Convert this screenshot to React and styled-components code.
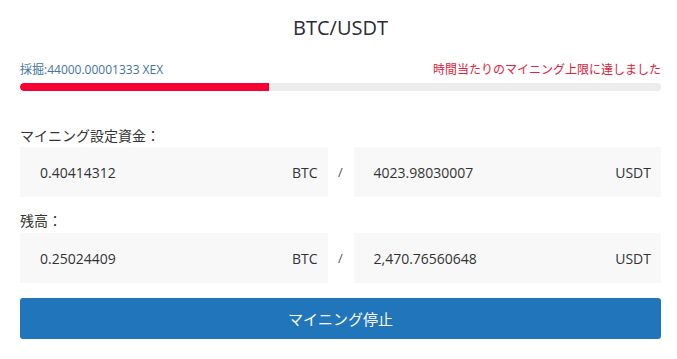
import React from "react";
import styled, { createGlobalStyle } from "styled-components";

const GlobalStyle = createGlobalStyle`
	body {
		margin: 0;
		background: #fff;
		font-family: "Open Sans", "Noto Sans CJK JP", sans-serif;
		color: #333;
	}
`;

const Wrapper = styled.div`
	padding: 14px 16px 0 20px;
	width: 641px;
`;

const Title = styled.h2`
	margin: 0;
	font-size: 20px;
	font-weight: 400;
	line-height: 28px;
	text-align: center;
	color: #2b2b33;
`;

const StatusRow = styled.div`
	display: flex;
	justify-content: space-between;
	margin-top: 20px;
	font-size: 12px;
	line-height: 16px;
`;

const Mined = styled.span`
	color: #3f72a3;
`;

const Warning = styled.span`
	color: #e3223b;
`;

const Track = styled.div`
	margin-top: 5px;
	height: 8px;
	border-radius: 4px;
	background: #ececec;
	overflow: hidden;
`;

const Fill = styled.div`
	height: 100%;
	background: #f80034;
	border-radius: 4px 0 0 4px;
`;

const Label = styled.div`
	margin-top: ${(p) => p.$top}px;
	margin-bottom: ${(p) => p.$gap}px;
	font-size: 14px;
	line-height: 20px;
	color: #333;
`;

const PairRow = styled.div`
	display: grid;
	grid-template-columns: 1fr 26px 1fr;
	align-items: center;
`;

const Field = styled.div`
	display: flex;
	align-items: center;
	justify-content: space-between;
	height: 50px;
	padding: 0 10px 0 20px;
	background: #f8f8f8;
	font-size: 14px;
	color: #333;
`;

const Slash = styled.span`
	text-align: center;
	font-size: 13px;
	color: #555;
`;

const StopButton = styled.button`
	display: block;
	width: 100%;
	height: 41px;
	margin-top: 15px;
	border: none;
	border-radius: 3px;
	background: #2175bb;
	color: #fff;
	font-family: "Open Sans", "Noto Sans CJK JP", sans-serif;
	font-size: 15px;
	cursor: pointer;
`;

function Pair({ left, right }) {
	return (
		<PairRow>
			<Field>
				<span>{left}</span>
				<span>BTC</span>
			</Field>
			<Slash>/</Slash>
			<Field>
				<span>{right}</span>
				<span>USDT</span>
			</Field>
		</PairRow>
	);
}

export default function App() {
	const progress = 38.8;
	return (
		<>
			<GlobalStyle />
			<Wrapper>
				<Title>BTC/USDT</Title>
				<StatusRow>
					<Mined>採掘:44000.00001333 XEX</Mined>
					<Warning>時間当たりのマイニング上限に達しました</Warning>
				</StatusRow>
				<Track>
					<Fill style={{ width: `${progress}%` }} />
				</Track>
				<Label $top={35} $gap={1}>マイニング設定資金：</Label>
				<Pair left="0.40414312" right="4023.98030007" />
				<Label $top={14} $gap={2}>残高：</Label>
				<Pair left="0.25024409" right="2,470.76560648" />
				<StopButton>マイニング停止</StopButton>
			</Wrapper>
		</>
	);
}
